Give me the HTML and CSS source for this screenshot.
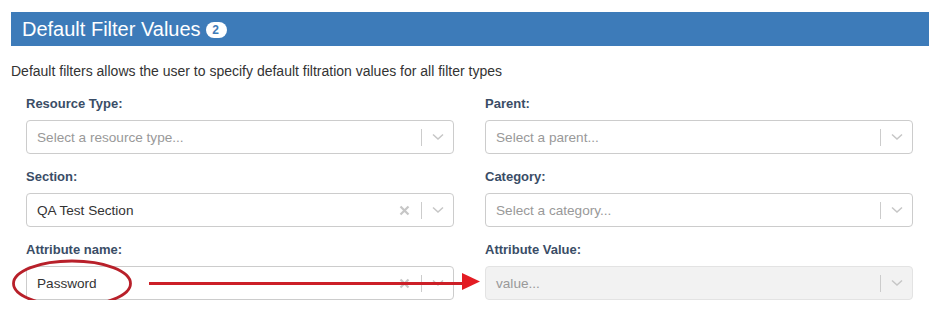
FILE: index.html
```html
<!DOCTYPE html>
<html lang="en">
<head>
    <meta charset="UTF-8">
    <title>Default Filter Values</title>
    <link rel="stylesheet" href="styles.css">
</head>
<body>
    <div class="panel">
        <h2 class="panel-title">Default Filter Values <span class="badge">2</span></h2>
        <p class="intro">Default filters allows the user to specify default filtration values for all filter types</p>

        <div class="filter-grid">
            <div class="field">
                <label>Resource Type:</label>
                <div class="select">
                    <span class="placeholder">Select a resource type...</span>
                    <span class="sep"></span>
                    <span class="arrow"><svg width="12" height="8" viewBox="0 0 12 8"><polyline points="1,1.5 6,6 11,1.5" /></svg></span>
                </div>
            </div>
            <div class="field">
                <label>Parent:</label>
                <div class="select">
                    <span class="placeholder">Select a parent...</span>
                    <span class="sep"></span>
                    <span class="arrow"><svg width="12" height="8" viewBox="0 0 12 8"><polyline points="1,1.5 6,6 11,1.5" /></svg></span>
                </div>
            </div>
            <div class="field">
                <label>Section:</label>
                <div class="select">
                    <span class="value">QA Test Section</span>
                    <span class="clear"><svg width="11" height="11" viewBox="0 0 11 11"><path d="M1.5 1.5 L9.5 9.5 M9.5 1.5 L1.5 9.5" /></svg></span>
                    <span class="sep"></span>
                    <span class="arrow"><svg width="12" height="8" viewBox="0 0 12 8"><polyline points="1,1.5 6,6 11,1.5" /></svg></span>
                </div>
            </div>
            <div class="field">
                <label>Category:</label>
                <div class="select">
                    <span class="placeholder">Select a category...</span>
                    <span class="sep"></span>
                    <span class="arrow"><svg width="12" height="8" viewBox="0 0 12 8"><polyline points="1,1.5 6,6 11,1.5" /></svg></span>
                </div>
            </div>
            <div class="field">
                <label>Attribute name:</label>
                <div class="select">
                    <span class="value">Password</span>
                    <span class="clear"><svg width="11" height="11" viewBox="0 0 11 11"><path d="M1.5 1.5 L9.5 9.5 M9.5 1.5 L1.5 9.5" /></svg></span>
                    <span class="sep"></span>
                    <span class="arrow"><svg width="12" height="8" viewBox="0 0 12 8"><polyline points="1,1.5 6,6 11,1.5" /></svg></span>
                </div>
            </div>
            <div class="field">
                <label>Attribute Value:</label>
                <div class="select disabled">
                    <span class="placeholder">value...</span>
                    <span class="sep"></span>
                    <span class="arrow"><svg width="12" height="8" viewBox="0 0 12 8"><polyline points="1,1.5 6,6 11,1.5" /></svg></span>
                </div>
            </div>
        </div>

        <!-- red markup drawn over the screenshot -->
        <svg class="markup" width="937" height="317" viewBox="0 0 937 317">
            <ellipse cx="72" cy="283.5" rx="58.5" ry="22.5" fill="none" stroke="#b8202a" stroke-width="2.8" />
            <line x1="149" y1="283.5" x2="464" y2="283.5" stroke="#cc1f27" stroke-width="3" />
            <polygon points="462,273 480,281.5 462,290" fill="#e31c23" />
        </svg>
    </div>
</body>
</html>
```

FILE: styles.css
```css
body {
    margin: 0;
    font-family: "Liberation Sans", Arial, sans-serif;
    color: #333;
}
.panel {
    position: relative;
    padding: 12px 8px 0 11px;
}
.panel-title {
    margin: 0;
    height: 34px;
    padding-left: 11px;
    background: #3d7bb9;
    color: #fff;
    font-size: 20px;
    font-weight: normal;
    line-height: 34px;
}
.badge {
    display: inline-block;
    min-width: 9px;
    padding: 2px 6px;
    border-radius: 10px;
    background: #fff;
    color: #3d7bb9;
    font-size: 12px;
    font-weight: bold;
    line-height: 12px;
    vertical-align: 2px;
}
.intro {
    margin: 15px 0 14px;
    font-size: 14px;
    line-height: 20px;
}
.filter-grid {
    display: grid;
    grid-template-columns: 1fr 1fr;
    column-gap: 31px;
    row-gap: 14px;
    padding: 0 16px 0 15px;
}
.field label {
    display: block;
    margin-bottom: 7px;
    color: #3a4d66;
    font-size: 13px;
    font-weight: bold;
    line-height: 18px;
}
.select {
    display: flex;
    align-items: center;
    height: 34px;
    box-sizing: border-box;
    border: 1px solid #ccc;
    border-radius: 4px;
    background: #fff;
    font-size: 13.6px;
}
.select.disabled {
    background: #f2f2f2;
    border-color: #e3e3e3;
}
.placeholder,
.value {
    flex-grow: 1;
    padding-left: 10px;
}
.placeholder {
    color: #999;
}
.clear {
    display: flex;
    justify-content: center;
    width: 34px;
}
.clear path {
    stroke: #c6c6c6;
    stroke-width: 2.2;
    fill: none;
}
.sep {
    width: 1px;
    height: 17px;
    background: #ccc;
}
.arrow {
    display: flex;
    justify-content: center;
    width: 31px;
}
.arrow polyline {
    stroke: #c6c6c6;
    stroke-width: 1.5;
    fill: none;
}
.markup {
    position: absolute;
    top: 0;
    left: 0;
    pointer-events: none;
}
```
